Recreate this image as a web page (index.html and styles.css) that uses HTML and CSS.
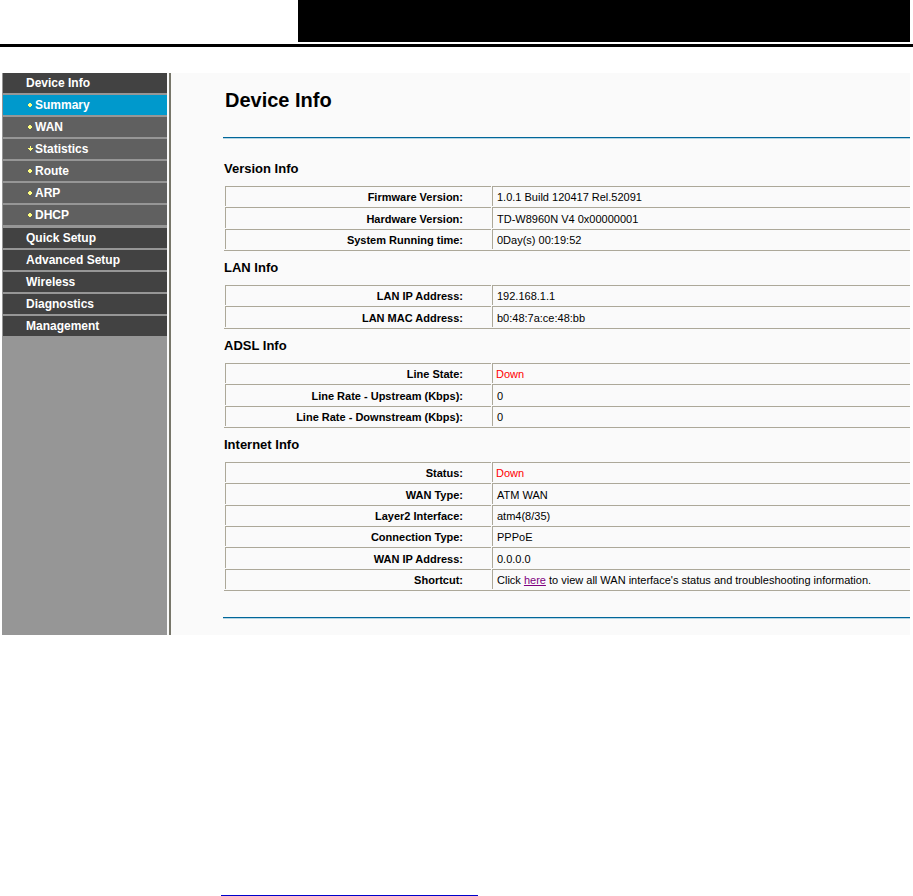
FILE: index.html
```html
<!DOCTYPE html>
<html lang="en">
<head>
<meta charset="utf-8">
<title>Device Info</title>
<link rel="stylesheet" href="styles.css">
</head>
<body>
<header class="masthead"><div class="banner"></div></header>
<div class="frame">
  <nav class="sidebar">
    <ul class="menu">
      <li>
        <a class="item" href="#device">Device Info</a>
        <ul class="submenu">
          <li><a class="item sub active" href="#summary"><svg class="dot" viewBox="0 0 6 6"><path d="M1 1h2v4H1zM0 2h4v2H0z"/></svg>Summary</a></li>
          <li><a class="item sub" href="#wan"><svg class="dot" viewBox="0 0 6 6"><path d="M1 1h2v4H1zM0 2h4v2H0z"/></svg>WAN</a></li>
          <li><a class="item sub" href="#statistics"><svg class="dot" viewBox="0 0 6 6"><path d="M2 0h1v5H2zM0 2h5v1H0zM1 2h3v2H1z"/></svg>Statistics</a></li>
          <li><a class="item sub" href="#route"><svg class="dot" viewBox="0 0 6 6"><path d="M1 1h2v4H1zM0 2h4v2H0z"/></svg>Route</a></li>
          <li><a class="item sub" href="#arp"><svg class="dot" viewBox="0 0 6 6"><path d="M1 1h2v4H1zM0 2h4v2H0z"/></svg>ARP</a></li>
          <li><a class="item sub" href="#dhcp"><svg class="dot" viewBox="0 0 6 6"><path d="M1 1h2v4H1zM0 2h4v2H0z"/></svg>DHCP</a></li>
        </ul>
      </li>
      <li><a class="item" href="#quick">Quick Setup</a></li>
      <li><a class="item" href="#advanced">Advanced Setup</a></li>
      <li><a class="item" href="#wireless">Wireless</a></li>
      <li><a class="item" href="#diagnostics">Diagnostics</a></li>
      <li><a class="item" href="#management">Management</a></li>
    </ul>
  </nav>
  <main class="content">
    <h1>Device Info</h1>
    <div class="sections">
      <h2>Version Info</h2>
      <table>
        <tr><th scope="row">Firmware Version:</th><td>1.0.1 Build 120417 Rel.52091</td></tr>
        <tr><th scope="row">Hardware Version:</th><td>TD-W8960N V4 0x00000001</td></tr>
        <tr><th scope="row">System Running time:</th><td>0Day(s) 00:19:52</td></tr>
      </table>
      <h2>LAN Info</h2>
      <table>
        <tr><th scope="row">LAN IP Address:</th><td>192.168.1.1</td></tr>
        <tr><th scope="row">LAN MAC Address:</th><td>b0:48:7a:ce:48:bb</td></tr>
      </table>
      <h2>ADSL Info</h2>
      <table>
        <tr><th scope="row">Line State:</th><td class="down">Down</td></tr>
        <tr><th scope="row">Line Rate - Upstream (Kbps):</th><td>0</td></tr>
        <tr><th scope="row">Line Rate - Downstream (Kbps):</th><td>0</td></tr>
      </table>
      <h2>Internet Info</h2>
      <table>
        <tr><th scope="row">Status:</th><td class="down">Down</td></tr>
        <tr><th scope="row">WAN Type:</th><td>ATM WAN</td></tr>
        <tr><th scope="row">Layer2 Interface:</th><td>atm4(8/35)</td></tr>
        <tr><th scope="row">Connection Type:</th><td>PPPoE</td></tr>
        <tr><th scope="row">WAN IP Address:</th><td>0.0.0.0</td></tr>
        <tr><th scope="row">Shortcut:</th><td>Click <a href="#wan-status">here</a> to view all WAN interface's status and troubleshooting information.</td></tr>
      </table>
    </div>
  </main>
</div>
<footer class="footer"><div class="footer-rule"></div></footer>
</body>
</html>
```
FILE: styles.css
```css
* {
  box-sizing: border-box;
}

body {
  margin: 0;
  min-height: 100vh;
  display: flex;
  flex-direction: column;
  background: #fff;
  color: #000;
  font-family: "Liberation Sans", Arial, sans-serif;
  font-size: 11px;
}

.masthead {
  padding: 0 3px 2px 298px;
  border-bottom: 3px solid #000;
}

.banner {
  height: 42px;
  background: #000;
}

.frame {
  display: flex;
  margin: 26px 3px 0 2px;
  overflow: hidden;
  background: #fafafa;
}

.sidebar {
  flex: 0 0 165px;
  background: #969696;
}

.menu,
.submenu {
  margin: 0;
  padding: 0;
  list-style: none;
}

.menu {
  padding-left: 1px;
}

.submenu {
  padding-bottom: 1px;
}

.item {
  display: flex;
  align-items: center;
  height: 22px;
  padding-left: 23px;
  border-bottom: 2px solid #969696;
  background: #424242;
  color: #fff;
  font-size: 12px;
  font-weight: bold;
  line-height: 18px;
  text-decoration: none;
}

.sub {
  gap: 1px;
  padding-left: 25px;
  background: #606060;
}

.active {
  background: #0099cc;
}

.dot {
  width: 6px;
  height: 6px;
  fill: #ffff80;
}

.content {
  flex: 1;
  min-width: 0;
  margin-left: 2px;
  padding-left: 52px;
  border-left: 2px solid #77766a;
}

h1 {
  margin: 0;
  padding: 15px 0 0 2px;
  height: 66px;
  border-bottom: 1px solid #b4d5e4;
  box-shadow: inset 0 -1px #006699;
  font-size: 20px;
  line-height: 24px;
}

.sections {
  margin-bottom: 17px;
  padding: 13px 0 26px 1px;
  border-bottom: 1px solid #006699;
  box-shadow: 0 1px #b4d5e4;
}

h2 {
  margin: 0;
  font-size: 13px;
  line-height: 33px;
}

/* The outer cell spacing runs past the clipped edge of the frame. */
table {
  width: calc(100% + 1px);
  table-layout: fixed;
  border-spacing: 1px;
  border-bottom: 1px solid #aca899;
}

th,
td {
  height: 20px;
  padding: 1px 0 0;
  border-top: 1px solid #aca899;
  border-left: 1px solid #aca899;
  line-height: 18px;
  white-space: nowrap;
}

tr:nth-child(3n + 2) > * {
  height: 21px;
}

th {
  width: 266px;
  padding-right: 28px;
  text-align: right;
}

td {
  padding-left: 4px;
}

.down {
  padding-left: 3px;
  color: #f00;
}

td a {
  color: #800080;
}

.footer {
  display: flex;
  flex: 1;
  align-items: flex-end;
  padding-left: 221px;
}

.footer-rule {
  width: 257px;
  height: 1px;
  background: #0000cc;
}
```
